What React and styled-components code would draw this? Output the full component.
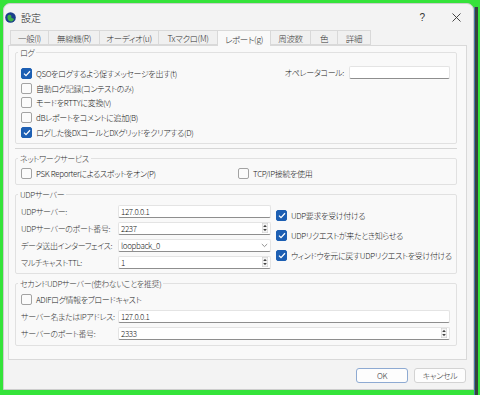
import React from "react";
import styled, { createGlobalStyle } from "styled-components";

// STYLES

const GlobalStyle = createGlobalStyle`
  html, body {
    margin: 0;
    padding: 0;
  }
  body {
    width: 480px;
    height: 395px;
    overflow: hidden;
    background: #35e33a;
    font-family: "Noto Sans CJK JP", "Noto Sans", sans-serif;
    font-feature-settings: "palt" 1;
    font-size: 8px;
    font-weight: 300;
    letter-spacing: -0.35px;
    color: #222;
  }
`;

const Desktop = styled.div`
  display: flex;
  height: 395px;
  padding: 3px 0 0 3px;
  box-sizing: border-box;
`;

const Window = styled.div`
  width: 471px;
  height: 387px;
  box-sizing: border-box;
  display: flex;
  flex-direction: column;
  overflow: hidden;
  background: #f3f3f3;
  border: 1px solid #cdcdcd;
  border-radius: 7px 7px 0 0;
`;

const BackWindow = styled.div`
  width: 4px;
  height: 388px;
  margin-top: 4px;
  background: linear-gradient(90deg, #4a78a8 0 1px, #36443f 1px);
`;

const TitleBar = styled.div`
  height: 26px;
  flex: none;
  display: flex;
  align-items: center;
  padding-left: 1px;
`;

const Title = styled.span`
  margin-left: 5px;
  font-size: 10px;
  letter-spacing: 0;
  color: #1a1a1a;
  flex: 1;
`;

const CaptionButton = styled.div`
  width: 34px;
  height: 26px;
  display: flex;
  align-items: center;
  justify-content: center;
  font-family: "Liberation Sans", sans-serif;
  font-size: 10px;
  color: #333;
`;

const TabBar = styled.div`
  height: 15px;
  flex: none;
  display: flex;
  align-items: flex-end;
  margin-left: 6px;
  position: relative;
  z-index: 1;
`;

const Tab = styled.div`
  width: ${(p) => p.$w}px;
  height: ${(p) => (p.$active ? 16 : 15)}px;
  margin-right: -1px;
  margin-bottom: ${(p) => (p.$active ? -1 : 0)}px;
  box-sizing: border-box;
  display: flex;
  align-items: center;
  justify-content: center;
  white-space: nowrap;
  font-size: 8.5px;
  border: 1px solid #d9d9d9;
  border-bottom: ${(p) => (p.$active ? "none" : "1px solid #d9d9d9")};
  background: ${(p) => (p.$active ? "#f9f9f9" : "#f0f0f0")};
  color: #333;
`;

const Pane = styled.div`
  height: 315px;
  flex: none;
  margin: 0 6px 0 4px;
  box-sizing: border-box;
  border: 1px solid #d9d9d9;
  background: #f9f9f9;
  padding: 1px 9px 0 6px;
  display: flex;
  flex-direction: column;
`;

const Group = styled.fieldset`
  margin: ${(p) => p.$mt || 0}px 0 0;
  padding: ${(p) => p.$pt}px 6px ${(p) => p.$pb}px 5px;
  border: 1px solid #e1e1e1;
  border-radius: 2px;
  min-width: 0;
`;

const Legend = styled.legend`
  padding: 0 2px;
  margin-left: -3px;
  line-height: 11px;
  color: #333;
`;

const Separator = styled.div`
  height: 1px;
  margin-top: 4px;
  background: #d6d6d6;
`;

const LogBody = styled.div`
  display: flex;
  justify-content: space-between;
`;

const Column = styled.div`
  display: flex;
  flex-direction: column;
  padding-top: ${(p) => p.$pt || 0}px;
`;

const CheckRow = styled.label`
  height: ${(p) => p.$h}px;
  display: flex;
  align-items: center;
  gap: 4px;
  white-space: nowrap;
`;

const Box = styled.span`
  width: 11px;
  height: 11px;
  flex: none;
  box-sizing: border-box;
  border-radius: 2px;
  border: 1px solid ${(p) => (p.$on ? "#1d5fb3" : "#a3a3a3")};
  background: ${(p) => (p.$on ? "#1d5fb3" : "#fbfbfb")};
  display: flex;
  align-items: center;
  justify-content: center;
`;

const OperatorRow = styled.div`
  height: 15px;
  margin-top: -1px;
  display: flex;
  align-items: center;
  gap: 5px;
`;

const TwoCols = styled.div`
  display: grid;
  grid-template-columns: 217px 1fr;
`;

const UdpBody = styled.div`
  display: flex;
  gap: 5px;
`;

const FormRow = styled.div`
  height: ${(p) => p.$h || 17}px;
  display: flex;
  align-items: center;
`;

const Label = styled.span`
  width: 97px;
  flex: none;
  white-space: nowrap;
  color: #333;
`;

const Field = styled.div`
  width: ${(p) => p.$w}px;
  height: 13px;
  box-sizing: border-box;
  background: #fff;
  border: 1px solid #e4e4e4;
  border-bottom-color: #8e8e8e;
  border-radius: 2px;
  display: flex;
  align-items: center;
  justify-content: space-between;
  padding: 0 2px 0 2px;
`;

const Footer = styled.div`
  flex: 1;
  display: flex;
  justify-content: flex-end;
  align-items: flex-start;
  gap: 6px;
  padding: 8px 7px 0 0;
`;

const Button = styled.div`
  width: 52px;
  height: 15px;
  box-sizing: border-box;
  display: flex;
  align-items: center;
  justify-content: center;
  background: #fdfdfd;
  border: 1px solid ${(p) => (p.$default ? "#8eaad2" : "#d3d3d3")};
  border-radius: 3px;
  color: #333;
`;

// ICONS

const AppIcon = () => (
  <svg width="11" height="11" viewBox="0 0 11 11">
    <circle cx="5.5" cy="5.5" r="5.3" fill="#1b3f8c" />
    <path d="M2.5 4.2c1-1.6 2.7-1.8 3.6-.8.7.8-.3 1.6.4 2.4.8.9 2.3.2 2.5 1.6-.9 1.8-2.8 2.5-4.6 1.7C3.3 8.4 2 6.4 2.5 4.2z" fill="#3fae49" />
  </svg>
);

const CloseIcon = () => (
  <svg width="9" height="9" viewBox="0 0 9 9">
    <path d="M0.5 0.5l8 8M8.5 0.5l-8 8" stroke="#333" strokeWidth="0.9" />
  </svg>
);

const CheckMark = () => (
  <svg width="8" height="7" viewBox="0 0 8 7">
    <path d="M1 3.6l2 2L7 1.3" fill="none" stroke="#fff" strokeWidth="1.3" />
  </svg>
);

const SpinArrows = () => (
  <svg width="6" height="10" viewBox="0 0 6 10">
    <rect x="0.25" y="0.25" width="5.5" height="9.5" fill="#f4f4f4" stroke="#c9c9c9" strokeWidth="0.5" />
    <path d="M1.2 4L3 1.8 4.8 4z" fill="#444" />
    <path d="M1.2 6L3 8.2 4.8 6z" fill="#444" />
  </svg>
);

const Chevron = () => (
  <svg width="7" height="5" viewBox="0 0 7 5">
    <path d="M0.8 1l2.7 2.6L6.2 1" fill="none" stroke="#777" strokeWidth="0.8" />
  </svg>
);

// COMPONENTS

const Check = ({ on, h = 15, children }) => (
  <CheckRow $h={h}>
    <Box $on={on}>{on && <CheckMark />}</Box>
    {children}
  </CheckRow>
);

const tabs = [
  ["一般(I)", 39],
  ["無線機(R)", 52],
  ["オーディオ(u)", 60],
  ["Txマクロ(M)", 60],
  ["レポート(g)", 54],
  ["周波数", 41],
  ["色", 28],
  ["詳細", 34],
];

const App = () => {
  return (
    <>
      <GlobalStyle />
      <Desktop>
        <Window>
          <TitleBar>
            <AppIcon />
            <Title>設定</Title>
            <CaptionButton>?</CaptionButton>
            <CaptionButton>
              <CloseIcon />
            </CaptionButton>
          </TitleBar>

          <TabBar>
            {tabs.map(([name, w]) => (
              <Tab key={name} $w={w} $active={name === "レポート(g)"}>
                {name}
              </Tab>
            ))}
          </TabBar>

          <Pane>
            <Group $pt={8} $pb={3}>
              <Legend>ログ</Legend>
              <LogBody>
                <Column>
                  <Check on h={14.75}>QSOをログするよう促すメッセージを出す(t)</Check>
                  <Check h={14.75}>自動ログ記録(コンテストのみ)</Check>
                  <Check h={14.75}>モードをRTTYに変換(v)</Check>
                  <Check h={14.75}>dBレポートをコメントに追加(B)</Check>
                  <Check on h={14.75}>ログした後DXコールとDXグリッドをクリアする(D)</Check>
                </Column>
                <OperatorRow>
                  <span>オペレータコール:</span>
                  <Field $w={101} />
                </OperatorRow>
              </LogBody>
            </Group>

            <Separator />

            <Group $mt={4} $pt={3} $pb={3}>
              <Legend>ネットワークサービス</Legend>
              <TwoCols>
                <Check h={14}>PSK Reporterによるスポットをオン(P)</Check>
                <Check h={14}>TCP/IP接続を使用</Check>
              </TwoCols>
            </Group>

            <Group $mt={4} $pt={3} $pb={2}>
              <Legend>UDPサーバー</Legend>
              <UdpBody>
                <Column>
                  <FormRow>
                    <Label>UDPサーバー:</Label>
                    <Field $w={153}>127.0.0.1</Field>
                  </FormRow>
                  <FormRow>
                    <Label>UDPサーバーのポート番号:</Label>
                    <Field $w={153}>
                      2237
                      <SpinArrows />
                    </Field>
                  </FormRow>
                  <FormRow>
                    <Label>データ送出インターフェイス:</Label>
                    <Field $w={153}>
                      loopback_0
                      <Chevron />
                    </Field>
                  </FormRow>
                  <FormRow>
                    <Label>マルチキャストTTL:</Label>
                    <Field $w={153}>
                      1
                      <SpinArrows />
                    </Field>
                  </FormRow>
                </Column>
                <Column $pt={3}>
                  <Check on h={20}>UDP要求を受け付ける</Check>
                  <Check on h={20}>UDPリクエストが来たとき知らせる</Check>
                  <Check on h={20}>ウィンドウを元に戻すUDPリクエストを受け付ける</Check>
                </Column>
              </UdpBody>
            </Group>

            <Group $mt={4} $pt={3} $pb={3}>
              <Legend>セカンドUDPサーバー(使わないことを推奨)</Legend>
              <Check h={16}>ADIFログ情報をブロードキャスト</Check>
              <FormRow>
                <Label>サーバー名またはIPアドレス:</Label>
                <Field $w={332}>127.0.0.1</Field>
              </FormRow>
              <FormRow>
                <Label>サーバーのポート番号:</Label>
                <Field $w={332}>
                  2333
                  <SpinArrows />
                </Field>
              </FormRow>
            </Group>
          </Pane>

          <Footer>
            <Button $default>OK</Button>
            <Button>キャンセル</Button>
          </Footer>
        </Window>
        <BackWindow />
      </Desktop>
    </>
  );
};

export default App;
